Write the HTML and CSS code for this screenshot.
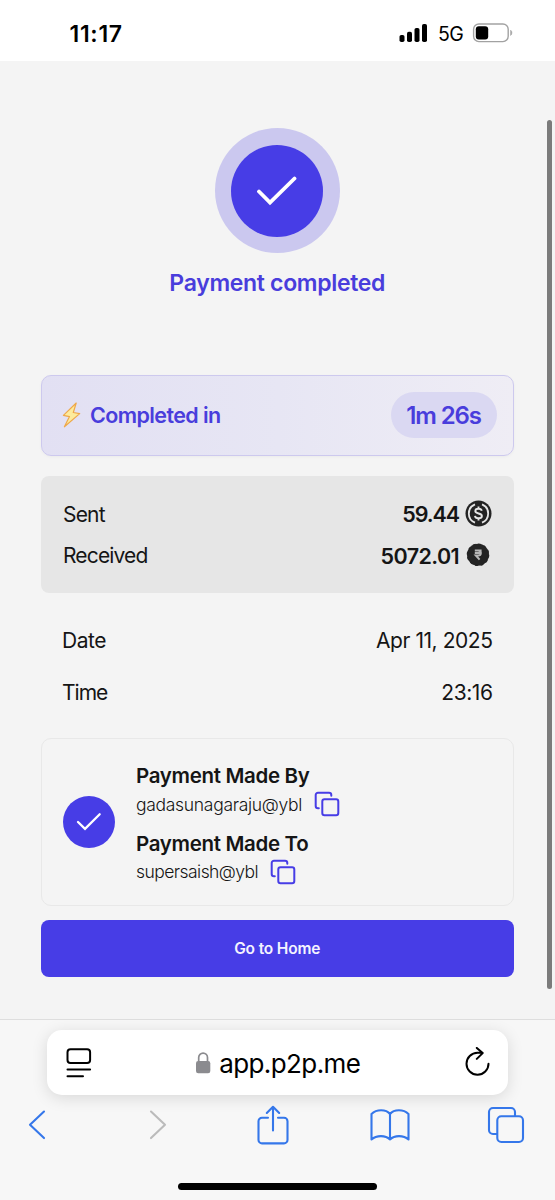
FILE: index.html
```html
<!DOCTYPE html>
<html lang="en">
<head>
<meta charset="utf-8">
<title>Payment completed</title>
<link rel="stylesheet" href="styles.css">
</head>
<body>
<div class="phone">
  <header class="status">
    <span class="clock">11:17</span>
    <div class="status-right">
      <svg class="signal" width="30" height="20" viewBox="0 0 30 20"><rect x="0.500" y="12" width="5" height="7" rx="1.8"/><rect x="8" y="8.800" width="5" height="10.200" rx="1.8"/><rect x="15.500" y="5" width="5" height="14" rx="1.8"/><rect x="23" y="1" width="5" height="18" rx="1.8"/></svg>
      <span class="net">5G</span>
      <svg class="battery" width="42" height="20" viewBox="0 0 42 20"><rect x="1.6" y="1" width="34.6" height="17.6" rx="5.3" fill="none" stroke="#a2a2a2" stroke-width="1.4"/><rect x="3.8" y="3.2" width="12.4" height="13.2" rx="3" fill="#000"/><path d="M38.600 7.200c1.700.900 1.700 4.300 0 5.200z" fill="#a2a2a2" stroke="#a2a2a2" stroke-width=".6"/></svg>
    </div>
  </header>

  <main class="page">
    <div class="halo"><div class="disc"><svg width="42" height="30" viewBox="0 0 42 30"><path d="M3 15.500l11 11L38.500 2.500" fill="none" stroke="#fff" stroke-width="3.800" stroke-linecap="round" stroke-linejoin="miter"/></svg></div></div>
    <h1 class="title">Payment completed</h1>

    <section class="banner">
      <svg class="bolt" width="20" height="26" viewBox="0 0 20 26"><path d="M14.200 1L1.400 13.400l6.100 1.200L2.400 24.800 17.700 11.600l-6.400-1.100z" fill="#fdeb9c" stroke="#eea84a" stroke-width="1.200" stroke-linejoin="round"/></svg>
      <span class="banner-label">Completed in</span>
      <span class="pill"><span class="pill-text">1m 26s</span></span>
    </section>

    <section class="amounts">
      <div class="row"><span class="label sent">Sent</span><span class="amount sent-value">59.44</span>
        <svg class="coin" width="28" height="28" viewBox="0 0 28 28"><circle cx="13.500" cy="13.500" r="13" fill="#242424"/><path d="M10 4.400a9.800 9.800 0 0 0 0 18.200M17 4.400a9.800 9.800 0 0 1 0 18.200" fill="none" stroke="#e6e6e6" stroke-width="1.800"/><path d="M16.800 10.800c-.3-1.400-1.500-2.100-3.300-2.100-1.900 0-3.200.9-3.200 2.300 0 3.400 6.600 1.500 6.600 5 0 1.400-1.300 2.300-3.400 2.300-2 0-3.300-.8-3.500-2.400M13.500 6.500v2.200M13.500 18.300v2.200" fill="none" stroke="#e6e6e6" stroke-width="1.900"/></svg></div>
      <div class="row"><span class="label received">Received</span><span class="amount received-value">5072.01</span>
        <svg class="coin" width="28" height="28" viewBox="0 0 28 28"><circle cx="13" cy="12.800" r="11" fill="#242424"/><circle cx="13" cy="12.800" r="10.700" fill="none" stroke="#242424" stroke-width="1.200" stroke-dasharray="2.900 2.700"/><path d="M9.800 8.500h6.800M9.800 11h6.800M10 8.500h3c3.800 0 3.800 5 0 5h-2.200l3.800 4.200" fill="none" stroke="#b8b8b8" stroke-width="2"/></svg></div>
    </section>

    <section class="details">
      <div class="detail"><span class="date">Date</span><span class="date-value">Apr 11, 2025</span></div>
      <div class="detail"><span class="time">Time</span><span class="time-value">23:16</span></div>
    </section>

    <section class="parties">
      <div class="small-disc"><svg width="26" height="20" viewBox="0 0 26 20"><path d="M2 10l7 6.800L23.700 2.200" fill="none" stroke="#fff" stroke-width="2.300" stroke-linecap="round"/></svg></div>
      <div class="party-list">
        <div class="party"><h2 class="party-title by">Payment Made By</h2><div class="handle"><span class="payer">gadasunagaraju@ybl</span>
          <svg class="copy" width="26" height="26" viewBox="0 0 26 26"><rect x="8.300" y="8.300" width="16" height="16" rx="2.200"/><path d="M4.800 17.200H4a2.300 2.300 0 0 1-2.300-2.300V4A2.300 2.300 0 0 1 4 1.700h11a2.300 2.300 0 0 1 2.300 2.300v.8"/></svg></div></div>
        <div class="party"><h2 class="party-title to">Payment Made To</h2><div class="handle"><span class="payee">supersaish@ybl</span>
          <svg class="copy" width="26" height="26" viewBox="0 0 26 26"><rect x="8.300" y="8.300" width="16" height="16" rx="2.200"/><path d="M4.800 17.200H4a2.300 2.300 0 0 1-2.300-2.300V4A2.300 2.300 0 0 1 4 1.700h11a2.300 2.300 0 0 1 2.300 2.300v.8"/></svg></div></div>
      </div>
    </section>

    <button class="home"><span class="home-text">Go to Home</span></button>
    <div class="scrollbar"></div>
  </main>

  <footer class="browser">
    <div class="address">
      <svg width="26" height="32" viewBox="0 0 26 32" fill="none" stroke="#000" stroke-width="2" stroke-linecap="round"><rect x="1.500" y="2.300" width="22.600" height="13.600" rx="3"/><path d="M1.500 22.500h22.600M1.500 29.300h15.500"/></svg>
      <div class="url"><svg width="16" height="22" viewBox="0 0 16 22"><rect x="1" y="9" width="14.300" height="12.300" rx="2.200" fill="#8b8b8f"/><path d="M3.700 9.500V5.500a4.400 4.400 0 0 1 8.800 0v4" fill="none" stroke="#8b8b8f" stroke-width="1.700"/></svg><span class="domain">app.p2p.me</span></div>
      <svg width="26" height="32" viewBox="0 0 26 32" fill="none" stroke="#000" stroke-width="2" stroke-linecap="round" stroke-linejoin="round"><path d="M24.500 16.700a11 11 0 1 1-11-11h4.800M12.800 .9l5.900 5.200-5.900 5.800"/></svg>
    </div>
    <nav class="tools">
      <svg class="back" width="18" height="30" viewBox="0 0 18 30"><path d="M16 1.500L2 14.800l14 13.300"/></svg>
      <svg class="forward" width="18" height="30" viewBox="0 0 18 30"><path d="M2 1.500l14 13.300L2 28.100"/></svg>
      <svg class="share" width="32" height="40" viewBox="0 0 32 40"><path d="M11 12.800H5a3.500 3.500 0 0 0-3.500 3.500v18.600A3.500 3.500 0 0 0 5 38.400h22a3.500 3.500 0 0 0 3.500-3.500V16.300a3.500 3.500 0 0 0-3.500-3.500h-6M16 25.500V2M9.800 8L16 1.800 22.200 8"/></svg>
      <svg class="book" width="40" height="33" viewBox="0 0 40 33"><path d="M20 5c-4-5-13.500-5-18.500 0v25.500c5-4.500 14-4.500 18.500 0 4.500-4.500 13.500-4.500 18.500 0V5C33.500 0 24 0 20 5v25.500"/></svg>
      <svg class="tabs" width="38" height="38" viewBox="0 0 38 38"><rect x="10.300" y="10.300" width="25.700" height="25.700" rx="4"/><path d="M10 28H6a4 4 0 0 1-4-4V6a4 4 0 0 1 4-4h18a4 4 0 0 1 4 4v4"/></svg>
    </nav>
    <div class="indicator"></div>
  </footer>
</div>
</body>
</html>
```
FILE: styles.css
```css
* { box-sizing: border-box; }
body { margin: 0; font-family: Inter, "Noto Sans", sans-serif; color: #151515; background: #f4f4f4; }
svg { display: block; flex: none; }
h1, h2 { margin: 0; }
span, h1, h2 { white-space: nowrap; }
.phone { width: 555px; height: 1200px; display: flex; flex-direction: column; overflow: hidden; }

.status { height: 61px; background: #fff; display: flex; align-items: center; justify-content: space-between; padding: 5px 41px 0 69.5px; color: #000; }
.clock { font-size: 23px; font-weight: 600; letter-spacing: 0.7px; padding-top: 1px; }
.status-right { display: flex; align-items: center; }
.signal { margin-right: 9px; }
.net { font-size: 19.5px; letter-spacing: -0.7px; margin-right: 9px; padding-top: 2px; }

.page { position: relative; height: 958px; padding: 67px 41.5px 0 41px; display: flex; flex-direction: column; }
.halo { width: 125px; height: 125px; border-radius: 50%; background: #cbc8ef; align-self: center; display: flex; align-items: center; justify-content: center; flex: none; }
.disc { width: 92px; height: 92px; border-radius: 50%; background: #473de6; display: flex; align-items: center; justify-content: center; }
.title { height: 30px; line-height: 30px; margin-top: 15px; text-align: center; font-size: 23px; font-weight: 600; letter-spacing: -0.32px; color: #493ddc; }

.banner { height: 80.5px; margin-top: 77px; border: 1.5px solid #cdc9ee; border-radius: 10px; background: linear-gradient(90deg, #e2e0f3, #e7e6f4 50%, #efedf5); display: flex; align-items: center; padding: 0 16px 0 20px; color: #493ddc; box-shadow: 0 1px 3px #0000000a; }
.banner-label { font-size: 21.5px; font-weight: 600; letter-spacing: -0.6px; margin-left: 8px; }
.pill { width: 106px; height: 46px; margin-left: auto; border-radius: 23px; background: #dad8f2; display: flex; align-items: center; justify-content: center; }
.pill-text { font-size: 24px; font-weight: 600; letter-spacing: -1.1px; }

.amounts { height: 117px; margin-top: 20.5px; border-radius: 8px; background: #e6e6e6; padding: 17.5px 21px 0 22px; font-size: 21px; }
.row { display: flex; align-items: center; height: 41.5px; }
.sent { letter-spacing: -0.8px; }
.received { letter-spacing: -0.85px; }
.amount { margin-left: auto; font-size: 21.5px; font-weight: 600; margin-right: 5.5px; }
.sent-value { letter-spacing: -1.1px; }
.received-value { letter-spacing: -0.6px; }

.details { padding: 21px 21px 0; font-size: 21px; }
.detail { height: 52px; display: flex; align-items: center; justify-content: space-between; letter-spacing: -0.45px; }
.time { letter-spacing: -1px; }

.parties { height: 168px; margin-top: 20px; border: 1.5px solid #e8e8e8; border-radius: 10px; display: flex; padding: 22px 21px 0; }
.small-disc { width: 52px; height: 52px; margin: 35px 21px 0 0; border-radius: 50%; background: #473de6; display: flex; align-items: center; justify-content: center; }
.party { height: 67.5px; }
.party-title { font-size: 20.5px; font-weight: 600; height: 30px; line-height: 30px; letter-spacing: -0.33px; }
.handle { display: flex; align-items: center; height: 26px; font-size: 17.5px; gap: 12px; font-weight: 300; }
.payer { letter-spacing: -0.3px; }
.payee { letter-spacing: -0.55px; }
.copy { fill: none; stroke: #473de6; stroke-width: 2; stroke-linecap: round; }

.home { height: 57px; margin-top: 13.5px; padding: 1px 0 0; border: 0; border-radius: 8px; background: #473de6; color: #f4f3ff; font: 600 15.5px Inter, sans-serif; letter-spacing: -0.15px; }
.scrollbar { position: absolute; right: 3px; top: 59px; width: 5px; height: 869px; border-radius: 3px; background: #7b7b7b; }

.browser { flex: 1; border-top: 1px solid #dedede; background: #f7f7f7; display: flex; flex-direction: column; padding-top: 10px; }
.address { height: 65px; margin: 0 47px 0 46.5px; border-radius: 15px; background: #fff; box-shadow: 0 3px 16px #00000020; padding: 0 18.5px 0 19.5px; display: flex; align-items: center; justify-content: space-between; }
.url { display: flex; align-items: center; gap: 8px; color: #000; }
.domain { font-size: 26px; letter-spacing: -0.6px; padding-top: 1px; }
.tools { height: 60px; padding-left: 28px; display: flex; align-items: center; }
.tools svg { fill: none; stroke: #3577ea; stroke-width: 2.1; stroke-linecap: round; stroke-linejoin: round; }
.tools .forward { stroke: #bbb; margin-left: 103px; }
.share { margin-left: 90px; }
.book { margin-left: 81px; }
.tabs { margin-left: 77px; }
.indicator { width: 199px; height: 7px; margin-top: 28px; border-radius: 4px; background: #000; align-self: center; }
```
